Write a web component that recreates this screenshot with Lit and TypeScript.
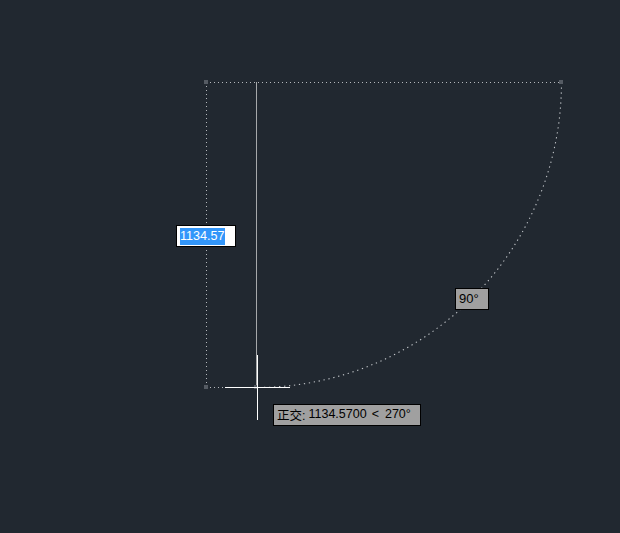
import { LitElement, html, css, svg } from "lit";
import { customElement } from "lit/decorators.js";

@customElement("app-root")
export class AppRoot extends LitElement {
  static styles = css`
    :host { display: block; width: 620px; height: 533px; }
    .canvas {
      position: relative; width: 620px; height: 533px; overflow: hidden;
      background: #212830;
      font-family: "Liberation Sans", "Noto Sans CJK SC", sans-serif;
      font-size: 12.5px; color: #000;
    }
    svg { position: absolute; left: 0; top: 0; display: block; }
    .dots { fill: none; stroke: #b4b8bc; stroke-width: 1; stroke-dasharray: 1 3; }
    .arc { fill: none; stroke: #c0c4c8; stroke-width: 1.1; stroke-dasharray: 1.3 3.7; }
    .radius { stroke: #a6a8aa; stroke-width: 1; }
    .cross { stroke: #fff; stroke-width: 1; }
    .grip { fill: #555b63; }
    .tip {
      position: absolute; box-sizing: border-box; display: flex; align-items: center;
      background: #a0a0a0; border: 1px solid #000; white-space: nowrap;
    }
    .input { left: 176px; top: 225px; width: 60px; height: 22px; background: #fff; padding-left: 3px; }
    .input span { background: #3296fa; color: #fff; line-height: 17px; height: 17px; width: 45px; display: block; font-size: 12.6px; }
    .angle { left: 455px; top: 288px; width: 34px; height: 22px; padding-left: 3px; font-size: 13px; padding-bottom: 1px; }
    .status { left: 273px; top: 404px; width: 148px; height: 22px; padding-left: 3px; padding-bottom: 2px; }
    .num { margin-left: 3px; }
    .lt { margin: 0 6px 0 5px; }
  `;

  render() {
    return html`
      <div class="canvas">
        <svg width="620" height="533" viewBox="0 0 620 533">
          ${svg`
            <path class="dots" d="M206 82.5H561" />
            <path class="dots" d="M206.5 82V387" />
            <path class="dots" d="M206 387.5H257" />
            <path class="arc" d="M561.5 82.5A305 305 0 0 1 256.5 387.5" />
            <path class="radius" d="M256.5 82V387" />
            <rect class="grip" x="204" y="80" width="4" height="4" />
            <rect class="grip" x="559" y="80" width="4" height="4" />
            <rect class="grip" x="204" y="385" width="4" height="4" />
            <rect class="grip" x="254" y="385" width="4" height="4" />
            <path class="cross" d="M225 387.5H290M257.5 355V420" />
          `}
        </svg>
        <div class="tip input"><span>1134.57</span></div>
        <div class="tip angle">90°</div>
        <div class="tip status"><span>正交:</span><span class="num">1134.5700</span><span class="lt">&lt;</span><span>270°</span></div>
      </div>
    `;
  }
}
